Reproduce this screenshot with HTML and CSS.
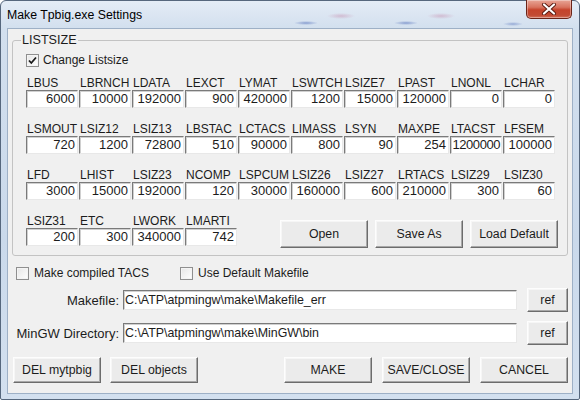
FILE: index.html
```html
<!DOCTYPE html>
<html>
<head>
<meta charset="utf-8">
<title>Make Tpbig.exe Settings</title>
<link rel="stylesheet" href="styles.css">
</head>
<body>
<div class="window">
  <div class="titlebar">
    <span class="title">Make Tpbig.exe Settings</span>
    <div class="close">
      <svg width="16" height="12" viewBox="0 0 16 12"><path d="M3 1.5 L13 10.5 M13 1.5 L3 10.5" stroke="#5a1a10" stroke-width="4" stroke-linecap="round"/><path d="M3 1.5 L13 10.5 M13 1.5 L3 10.5" stroke="#fff" stroke-width="2.2" stroke-linecap="round"/></svg>
    </div>
  </div>
  <div class="client">
    <fieldset class="group">
      <legend>LISTSIZE</legend>
      <div class="check-row">
        <span class="cb"><svg width="11" height="11" viewBox="0 0 11 11"><polyline points="2,5.5 4.3,8 9,2.5" fill="none" stroke="#1a1a1a" stroke-width="1.8"/></svg></span>
        <span>Change Listsize</span>
      </div>
      <div class="grid">
        <div class="field"><span class="lbl">LBUS</span><div class="edit">6000</div></div>
        <div class="field"><span class="lbl">LBRNCH</span><div class="edit">10000</div></div>
        <div class="field"><span class="lbl">LDATA</span><div class="edit">192000</div></div>
        <div class="field"><span class="lbl">LEXCT</span><div class="edit">900</div></div>
        <div class="field"><span class="lbl">LYMAT</span><div class="edit">420000</div></div>
        <div class="field"><span class="lbl">LSWTCH</span><div class="edit">1200</div></div>
        <div class="field"><span class="lbl">LSIZE7</span><div class="edit">15000</div></div>
        <div class="field"><span class="lbl">LPAST</span><div class="edit">120000</div></div>
        <div class="field"><span class="lbl">LNONL</span><div class="edit">0</div></div>
        <div class="field"><span class="lbl">LCHAR</span><div class="edit">0</div></div>

        <div class="field"><span class="lbl">LSMOUT</span><div class="edit">720</div></div>
        <div class="field"><span class="lbl">LSIZ12</span><div class="edit">1200</div></div>
        <div class="field"><span class="lbl">LSIZ13</span><div class="edit">72800</div></div>
        <div class="field"><span class="lbl">LBSTAC</span><div class="edit">510</div></div>
        <div class="field"><span class="lbl">LCTACS</span><div class="edit">90000</div></div>
        <div class="field"><span class="lbl">LIMASS</span><div class="edit">800</div></div>
        <div class="field"><span class="lbl">LSYN</span><div class="edit">90</div></div>
        <div class="field"><span class="lbl">MAXPE</span><div class="edit">254</div></div>
        <div class="field"><span class="lbl">LTACST</span><div class="edit tight">1200000</div></div>
        <div class="field"><span class="lbl">LFSEM</span><div class="edit">100000</div></div>

        <div class="field"><span class="lbl">LFD</span><div class="edit">3000</div></div>
        <div class="field"><span class="lbl">LHIST</span><div class="edit">15000</div></div>
        <div class="field"><span class="lbl">LSIZ23</span><div class="edit">192000</div></div>
        <div class="field"><span class="lbl">NCOMP</span><div class="edit">120</div></div>
        <div class="field"><span class="lbl">LSPCUM</span><div class="edit">30000</div></div>
        <div class="field"><span class="lbl">LSIZ26</span><div class="edit">160000</div></div>
        <div class="field"><span class="lbl">LSIZ27</span><div class="edit">600</div></div>
        <div class="field"><span class="lbl">LRTACS</span><div class="edit">210000</div></div>
        <div class="field"><span class="lbl">LSIZ29</span><div class="edit">300</div></div>
        <div class="field"><span class="lbl">LSIZ30</span><div class="edit">60</div></div>

        <div class="field"><span class="lbl">LSIZ31</span><div class="edit">200</div></div>
        <div class="field"><span class="lbl">ETC</span><div class="edit">300</div></div>
        <div class="field"><span class="lbl">LWORK</span><div class="edit">340000</div></div>
        <div class="field"><span class="lbl">LMARTI</span><div class="edit">742</div></div>
        <div class="actions">
          <button class="btn">Open</button>
          <button class="btn">Save As</button>
          <button class="btn">Load Default</button>
        </div>
      </div>
    </fieldset>

    <div class="options">
      <div class="opt opt-first"><span class="cb"></span><span>Make compiled TACS</span></div>
      <div class="opt"><span class="cb"></span><span>Use Default Makefile</span></div>
    </div>

    <div class="pathrow">
      <span class="plabel">Makefile:</span>
      <div class="pedit">C:\ATP\atpmingw\make\Makefile_err</div>
      <button class="btn ref">ref</button>
    </div>
    <div class="pathrow second">
      <span class="plabel">MinGW Directory:</span>
      <div class="pedit">C:\ATP\atpmingw\make\MinGW\bin</div>
      <button class="btn ref">ref</button>
    </div>

    <div class="bottom">
      <div class="bgroup">
        <button class="btn wide">DEL mytpbig</button>
        <button class="btn wide">DEL objects</button>
      </div>
      <div class="bgroup right">
        <button class="btn wide">MAKE</button>
        <button class="btn wide">SAVE/CLOSE</button>
        <button class="btn wide">CANCEL</button>
      </div>
    </div>
  </div>
</div>
</body>
</html>
```

FILE: styles.css
```css
* { box-sizing: border-box; }
html, body { margin: 0; padding: 0; }
body {
  width: 580px;
  height: 400px;
  overflow: hidden;
  background: #ffffff;
  font-family: "Liberation Sans", Arial, sans-serif;
  font-size: 12px;
  color: #1c1c1c;
}

.window {
  width: 580px;
  height: 400px;
  display: flex;
  flex-direction: column;
  border: 1px solid #56677d;
  border-radius: 6px 6px 2px 2px;
  padding: 0 7px 6px 7px;
  background:
    radial-gradient(ellipse 12px 2px at 305px 22px, rgba(70,100,180,0.55), rgba(70,100,180,0)),
    radial-gradient(ellipse 14px 3px at 340px 15px, rgba(190,110,150,0.35), rgba(190,110,150,0)),
    radial-gradient(ellipse 12px 2px at 405px 22px, rgba(70,100,180,0.55), rgba(70,100,180,0)),
    radial-gradient(ellipse 14px 3px at 440px 15px, rgba(190,110,150,0.35), rgba(190,110,150,0)),
    radial-gradient(ellipse 10px 2px at 512px 23px, rgba(70,100,180,0.45), rgba(70,100,180,0)),
    linear-gradient(#e4ecf6, #d2dfee 28px, #cad9eb 60%, #d3e0ef);
}

.titlebar {
  height: 28px;
  flex: none;
  display: flex;
  justify-content: space-between;
  align-items: flex-start;
}
.title {
  margin: 7px 0 0 -1px;
  line-height: 14px;
  font-size: 12.3px;
  color: #000;
}
.close {
  width: 46px;
  height: 19px;
  margin-top: -1px;
  display: flex;
  align-items: center;
  justify-content: center;
  border: 1px solid #6b2418;
  border-top: none;
  border-radius: 0 0 5px 5px;
  background: linear-gradient(#e8a596, #d8735f 40%, #c5432b 55%, #c24a33 85%, #d4735d);
  box-shadow: inset 0 0 0 1px rgba(255,255,255,0.35);
}

.client {
  flex: 1;
  background: #f0f0f0;
  box-shadow: 0 0 0 1px #9eb0c6;
  padding: 3px 4px 0 4px;
}

.group {
  margin: 0;
  padding: 5px 8px 9px 8px;
  border: 1px solid #c3c3c3;
  border-radius: 3px;
  min-width: 0;
}
.group legend {
  padding: 0 1px;
  font-size: 12.6px;
  line-height: 16px;
}

.check-row {
  display: flex;
  align-items: center;
  height: 14px;
  margin-left: 5px;
  gap: 4px;
}
.cb {
  width: 13px;
  height: 13px;
  flex: none;
  display: flex;
  align-items: center;
  justify-content: center;
  border: 1px solid #8f8f8f;
  background: linear-gradient(135deg, #e6e6e6, #ffffff);
  box-shadow: inset 0 0 0 1px #f4f4f4;
}

.grid {
  margin: 9px 0 0 5px;
  display: grid;
  grid-template-columns: repeat(10, 52px);
  column-gap: 1px;
  row-gap: 14px;
}
.field {
  display: flex;
  flex-direction: column;
}
.lbl {
  height: 14px;
  line-height: 14px;
  padding-left: 1px;
  white-space: nowrap;
}
.edit {
  height: 18px;
  background: #fff;
  border-style: solid;
  border-width: 1px;
  border-color: #7a7a7a #e8e8e8 #e8e8e8 #7a7a7a;
  box-shadow: inset 1px 1px 0 #d0d0d0;
  text-align: right;
  padding-right: 2px;
  font-size: 13px;
  line-height: 16px;
  white-space: nowrap;
  overflow: hidden;
}
.edit.tight {
  padding-right: 1px;
  letter-spacing: -0.45px;
}

.actions {
  grid-column: 5 / 11;
  align-self: end;
  display: flex;
  justify-content: flex-end;
  gap: 7px;
  margin: 0 -3px -2px 0;
}

.btn {
  font-family: inherit;
  font-size: 12.3px;
  color: #1c1c1c;
  height: 28px;
  width: 88px;
  padding: 0;
  border-style: solid;
  border-width: 1px;
  border-color: #fdfdfd #6c6c6c #6c6c6c #fdfdfd;
  border-radius: 0;
  background: #ebebeb;
  box-shadow: inset -1px -1px 0 #a8a8a8, inset 1px 1px 0 #f6f6f6;
}

.options {
  display: flex;
  align-items: center;
  height: 14px;
  margin: 10px 0 0 4px;
}
.opt {
  display: flex;
  align-items: center;
  gap: 5px;
}
.opt-first { width: 164px; }

.pathrow {
  display: flex;
  align-items: center;
  height: 24px;
  margin-top: 8px;
}
.pathrow.second { margin-top: 9px; }
.plabel {
  width: 107px;
  text-align: right;
  margin-right: 4px;
  font-size: 13px;
  white-space: nowrap;
}
.pedit {
  width: 394px;
  height: 20px;
  background: #fff;
  border-style: solid;
  border-width: 1px;
  border-color: #7a7a7a #e8e8e8 #e8e8e8 #7a7a7a;
  box-shadow: inset 1px 1px 0 #d0d0d0;
  font-size: 12.4px;
  line-height: 18px;
  padding-left: 1px;
  white-space: nowrap;
}
.btn.ref {
  width: 41px;
  height: 24px;
  margin-left: 10px;
}

.bottom {
  display: flex;
  justify-content: space-between;
  margin: 12px 0 0 1px;
}
.bgroup {
  display: flex;
  gap: 9px;
}
.bgroup.right { gap: 10px; }
.btn.wide {
  height: 26px;
  width: 88px;
}
```
